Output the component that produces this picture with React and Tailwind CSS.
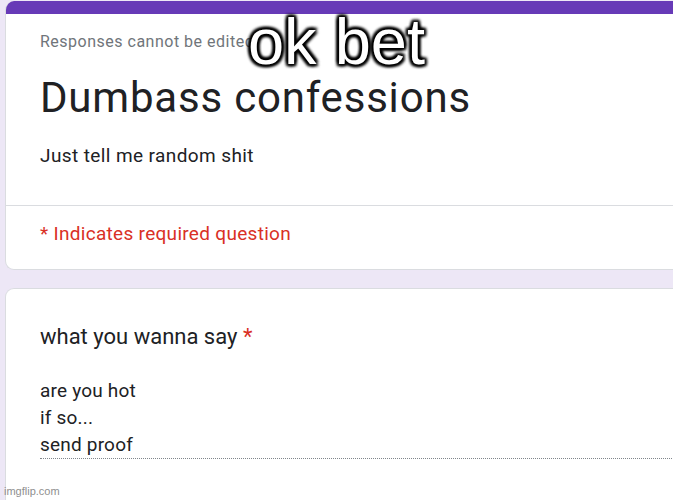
export default function App() {
  return (
    <div
      className="relative w-[673px] h-[500px] overflow-hidden bg-[#ede7f6]"
      style={{ fontFamily: "Roboto, 'Liberation Sans', sans-serif" }}
    >
      <div className="pl-[5px] pt-[1px] flex flex-col gap-[18px]">
        <div className="w-[700px] rounded-l-[9px] bg-white overflow-hidden border-l border-b border-[#dadce0]">
          <div className="h-[13px] bg-[#673ab7]" />
          <div className="pl-[34px] pt-[18px] pb-[37px]">
            <div className="text-[16px] leading-[20px] tracking-[0.5px] text-[#70757a]">Responses cannot be edited</div>
            <div className="mt-[21px] text-[42px] leading-[50px] tracking-[0.8px] text-[#202124]">Dumbass confessions</div>
            <div className="mt-[21px] text-[19px] leading-[24px] tracking-[0.4px] text-[#202124]">Just tell me random shit</div>
          </div>
          <div className="border-t border-[#dadce0] pl-[34px] pt-[16px] pb-[23px]">
            <div className="text-[19px] leading-[24px] tracking-[0.3px] text-[#d93025]">* Indicates required question</div>
          </div>
        </div>
        <div className="w-[700px] h-[260px] rounded-tl-[9px] bg-white border-l border-t border-[#dadce0]">
          <div className="pl-[34px] pt-[34px]">
            <div className="text-[22px] leading-[28px] text-[#202124]">
              what you wanna say <span className="text-[#d93025]">*</span>
            </div>
            <div className="mt-[26px] w-[650px] border-b border-dotted border-[#80868b] text-[19px] leading-[27px] tracking-[0.2px] text-[#202124]">
              <div>are you hot</div>
              <div>if so...</div>
              <div>send proof</div>
            </div>
          </div>
        </div>
      </div>
      <div
        className="absolute left-0 right-0 top-[6px] text-center text-white text-[65px] leading-[72px]"
        style={{
          fontFamily: "'Liberation Sans', Arial, sans-serif",
          textShadow:
            "0 0 4px #000, 0 0 4px #000, 0 0 4px #000, 2px 2px 3px #000, -2px -2px 3px #000, 2px -2px 3px #000, -2px 2px 3px #000",
        }}
      >
        ok bet
      </div>
      <div
        className="absolute left-[4px] top-[484px] text-[11px] leading-[14px] text-[#8f8f8f]"
        style={{ fontFamily: "'Liberation Sans', Arial, sans-serif" }}
      >
        imgflip.com
      </div>
    </div>
  );
}
